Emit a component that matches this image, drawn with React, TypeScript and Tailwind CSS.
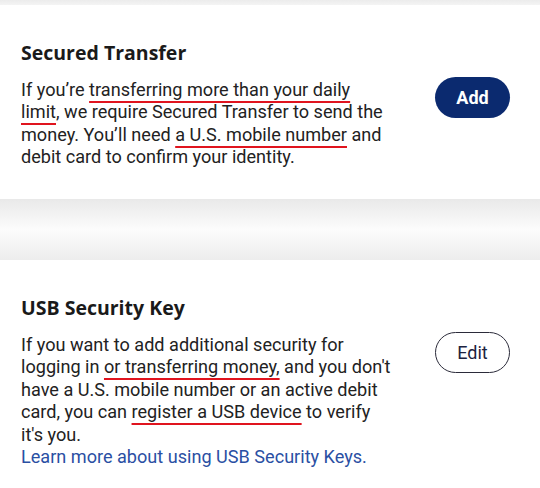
import React from 'react';

const mark = 'underline decoration-[#e0141e] decoration-2 underline-offset-[5px] [text-decoration-skip-ink:none]';

function Card({
  title,
  action,
  children,
  className,
}: {
  title: string;
  action: React.ReactNode;
  children: React.ReactNode;
  className?: string;
}) {
  return (
    <section className={`bg-white px-[21px] pt-[36px] ${className ?? ''}`}>
      <h2 className="font-['Open_Sans',sans-serif] text-[19.5px] font-bold leading-[24px] text-[#1a1a1a]">{title}</h2>
      <div className="mt-[14px] flex items-start justify-between">
        <p className="whitespace-nowrap font-['Roboto',sans-serif] text-[18.1px] leading-[22.4px] text-[#222]">{children}</p>
        {action}
      </div>
    </section>
  );
}

export default function App() {
  return (
    <div className="min-h-[488px] w-[540px] bg-white">
      <div className="h-[5px] bg-gradient-to-b from-[#ececec] to-[#f4f4f4]" />

      <Card
        title="Secured Transfer"
        className="h-[194px]"
        action={
          <button className="mr-[9px] mt-[-2px] h-[41px] w-[75px] rounded-full bg-[#0b2a6f] font-['Roboto',sans-serif] text-[18px] font-bold text-white">
            Add
          </button>
        }
      >
        If you’re <span className={mark}>transferring more than your daily</span>
        <br />
        <span className={mark}>limit</span>, we require Secured Transfer to send the
        <br />
        money. You’ll need <span className={mark}>a U.S. mobile number</span> and
        <br />
        debit card to confirm your identity.
      </Card>

      <div className="h-[61px] bg-gradient-to-b from-[#e9e9e9] via-[#fcfcfc] to-[#ededed]" />

      <Card
        title="USB Security Key"
        action={
          <button className="mr-[9px] mt-[-2px] h-[41px] w-[75px] rounded-full border border-[#2b2b3a] bg-white font-['Roboto',sans-serif] text-[18px] text-[#1d2340]">
            Edit
          </button>
        }
      >
        If you want to add additional security for
        <br />
        logging in <span className={mark}>or transferring money,</span> and you don't
        <br />
        have a U.S. mobile number or an active debit
        <br />
        card, you can <span className={mark}>register a USB device</span> to verify
        <br />
        it's you.
        <br />
        <a className="text-[#2a4fa3]">Learn more about using USB Security Keys.</a>
      </Card>
    </div>
  );
}
